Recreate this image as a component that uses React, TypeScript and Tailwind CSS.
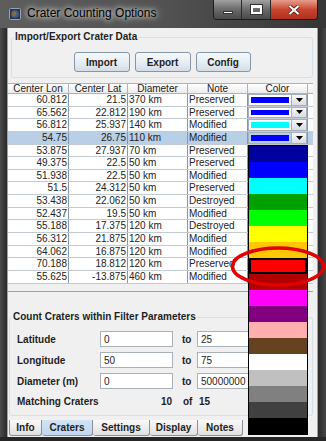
type Row = [string, string, string, string, string];

const rows: Row[] = [
  ["60.812", "21.5", "370 km", "Preserved", "bg-[#0000ff]"],
  ["65.562", "22.812", "190 km", "Preserved", "bg-[#0000ff]"],
  ["56.812", "25.937", "140 km", "Modified", "bg-[#00ffff]"],
  ["54.75", "26.75", "110 km", "Modified", "bg-[#0000ff]"],
  ["53.875", "27.937", "70 km", "Preserved", "bg-[#0000ff]"],
  ["49.375", "22.5", "50 km", "Preserved", "bg-[#0000ff]"],
  ["51.938", "22.5", "50 km", "Modified", "bg-[#0000ff]"],
  ["51.5", "24.312", "50 km", "Preserved", "bg-[#0000ff]"],
  ["53.438", "22.062", "50 km", "Destroyed", "bg-[#0000ff]"],
  ["52.437", "19.5", "50 km", "Modified", "bg-[#0000ff]"],
  ["55.188", "17.375", "120 km", "Destroyed", "bg-[#0000ff]"],
  ["56.312", "21.875", "120 km", "Modified", "bg-[#0000ff]"],
  ["64.062", "16.875", "120 km", "Modified", "bg-[#0000ff]"],
  ["70.188", "18.812", "120 km", "Preserved", "bg-[#ff0000]"],
  ["55.625", "-13.875", "460 km", "Modified", "bg-[#0000ff]"],
];

const swatches = [
  "bg-[#00009c]",
  "bg-[#0000ff]",
  "bg-[#00ffff]",
  "bg-[#00a000]",
  "bg-[#00ff00]",
  "bg-[#ffff00]",
  "bg-[#ffc800]",
  "bg-[#ff0000]",
  "bg-[#b00000]",
  "bg-[#ff00ff]",
  "bg-[#800080]",
  "bg-[#ffafaf]",
  "bg-[#654321]",
  "bg-[#ffffff]",
  "bg-[#c0c0c0]",
  "bg-[#808080]",
  "bg-[#404040]",
  "bg-[#000000]",
];

function TitleBar() {
  return (
    <div className="flex h-[28px] items-start bg-gradient-to-r from-[#5d5d5d] via-[#525252] to-[#353535]">
      <svg className="ml-[9px] mt-[8px]" width="12" height="12" viewBox="0 0 12 12">
        <rect x="0.5" y="0.5" width="11" height="11" rx="1" fill="#27344a" stroke="#9aa3ad" />
        <circle cx="6" cy="6" r="4" fill="#3a5a8a" />
        <path d="M3 5c1-2 3-2 4-1s1 3-1 4-3 0-3-3z" fill="#8a6a3a" />
      </svg>
      <span className="ml-[6px] mt-[6px] text-[12px] leading-[15px] text-black [text-shadow:0_0_5px_rgba(255,255,255,0.95),0_0_9px_rgba(255,255,255,0.8)]">
        Crater Counting Options
      </span>
      <div className="ml-auto mr-[8px] flex h-[20px] overflow-hidden rounded-b-[4px] border border-t-0 border-[#1c1c1c]">
        <div className="flex w-[28px] items-end justify-center bg-gradient-to-b from-[#a2a2a2] via-[#6a6a6a] to-[#4a4a4a] pb-[5px] border-r border-[#2a2a2a]">
          <div className="h-[3px] w-[10px] bg-white border border-[#333]" />
        </div>
        <div className="flex w-[29px] items-center justify-center bg-gradient-to-b from-[#a2a2a2] via-[#6a6a6a] to-[#4a4a4a] border-r border-[#2a2a2a]">
          <div className="h-[9px] w-[11px] border-2 border-t-[3px] border-white outline outline-1 outline-[#333]" />
        </div>
        <div className="flex w-[46px] items-center justify-center bg-gradient-to-b from-[#e49c8c] via-[#c9452f] to-[#b0301c]">
          <svg width="12" height="10" viewBox="0 0 12 10">
            <path d="M1.5 1l9 8M10.5 1l-9 8" stroke="#3a0a04" strokeWidth="3.4" />
            <path d="M1.5 1l9 8M10.5 1l-9 8" stroke="#fff" strokeWidth="2.2" />
          </svg>
        </div>
      </div>
    </div>
  );
}

function Button({ label, width }: { label: string; width: string }) {
  return (
    <div
      className={`${width} flex h-[20px] items-center justify-center rounded-[3px] border border-[#8596a6] bg-gradient-to-b from-[#f7f9fb] via-[#e8eef4] to-[#d3dde7] text-[10px] font-bold text-[#1e1e1e]`}
    >
      {label}
    </div>
  );
}

function Combo({ swatch, selected }: { swatch: string; selected?: boolean }) {
  return (
    <div className="flex h-full w-full">
      <div className={`flex-1 border border-[#a4b0bc] p-[2px] ${selected ? "bg-[#b8cfe5]" : "bg-white"}`}>
        <div className={`h-full w-full ${swatch}`} />
      </div>
      <div className="flex w-[15px] items-center justify-center border border-l-0 border-[#a4b0bc] bg-gradient-to-b from-[#f8f8f8] to-[#d9dde2]">
        <svg width="7" height="4" viewBox="0 0 7 4">
          <path d="M0 0h7L3.5 4z" fill="#000" />
        </svg>
      </div>
    </div>
  );
}

function CraterTable() {
  return (
    <div className="mt-[5px] h-[209px] w-[305px] border-b border-[#a0a0a0] bg-[#f0f0f0] text-[10px] text-[#222]">
      <div className="flex h-[11px] border-y border-[#a9b4bf] bg-gradient-to-b from-white to-[#ececec] leading-[9px]">
        <div className="w-[61px] border-r border-[#a9b4bf] text-center">Center Lon</div>
        <div className="w-[59px] border-r border-[#a9b4bf] text-center">Center Lat</div>
        <div className="w-[60px] border-r border-[#a9b4bf] text-center">Diameter</div>
        <div className="w-[60px] border-r border-[#a9b4bf] text-center">Note</div>
        <div className="w-[60px] border-r border-[#a9b4bf] text-center">Color</div>
      </div>
      {rows.map((r, i) => {
        const sel = i === 3;
        return (
          <div
            key={i}
            className={`flex h-[12.65px] border-b border-[#c4cad1] leading-[11px] ${sel ? "bg-[#b8cfe5]" : "bg-white"}`}
          >
            <div className="w-[61px] border-r border-[#8797a9] pr-[1px] text-right">{r[0]}</div>
            <div className="w-[59px] border-r border-[#8797a9] pr-[1px] text-right">{r[1]}</div>
            <div className="w-[60px] border-r border-[#8797a9] pl-[1px]">{r[2]}</div>
            <div className="w-[60px] border-r border-[#8797a9] pl-[1px]">{r[3]}</div>
            <div className="w-[60px] border-r border-[#8797a9]">
              <Combo swatch={r[4]} selected={sel} />
            </div>
          </div>
        );
      })}
    </div>
  );
}

function FilterRow({ label, from, to }: { label: string; from: string; to: string }) {
  return (
    <div className="flex h-[16px] items-center text-[10px]">
      <div className="w-[83px] font-bold">{label}</div>
      <div className="flex h-full w-[73px] items-center border border-[#a9b0b8] bg-white pl-[3px]">{from}</div>
      <div className="w-[24px] pl-[9px] font-bold">to</div>
      <div className="flex h-full w-[100px] items-center border border-[#a9b0b8] bg-white pl-[3px]">{to}</div>
    </div>
  );
}

function Tabs() {
  const tabs = [
    { label: "Info", w: "w-[33px]" },
    { label: "Craters", w: "w-[51px]" },
    { label: "Settings", w: "w-[57px]" },
    { label: "Display", w: "w-[48px]" },
    { label: "Notes", w: "w-[45px]" },
  ];
  return (
    <div className="ml-[1px] mt-[4px] flex h-[16px] text-[10px] font-bold text-[#1e1e1e]">
      {tabs.map((t, i) => (
        <div
          key={t.label}
          className={`${t.w} flex items-center justify-center rounded-b-[3px] border border-t-0 border-[#8b9099] ${i > 0 ? "border-l-0" : ""} ${
            i === 1 ? "bg-gradient-to-b from-[#d2e3f4] to-[#c1d7ee]" : "bg-gradient-to-b from-[#f9f9f9] to-[#e1e1e1]"
          }`}
        >
          {t.label}
        </div>
      ))}
    </div>
  );
}

export default function App() {
  return (
    <div className="relative flex h-[441px] w-[326px] flex-col overflow-hidden bg-[#2c2c2c] font-['Liberation_Sans',Arial,sans-serif] text-[#1e1e1e]">
      <TitleBar />
      <div className="flex h-[409px]">
        <div className="w-[8px] border-r border-[#97a2ad] bg-gradient-to-r from-[#4c4c4c] to-[#2a2a2a]" />
        <div className="flex w-[309px] flex-col bg-[#f0f0f0]">
          <fieldset className="ml-[3px] mr-[4px] mt-[3px] h-[47px] rounded-[3px] border border-[#d5dfe5]">
            <legend className="ml-[2px] px-[1px] text-[10px] font-bold leading-[12px]">Import/Export Crater Data</legend>
            <div className="mt-[9px] flex justify-center gap-[5px]">
              <Button label="Import" width="w-[56px]" />
              <Button label="Export" width="w-[56px]" />
              <Button label="Config" width="w-[55px]" />
            </div>
          </fieldset>
          <CraterTable />
          <fieldset className="ml-[1px] mr-[4px] mt-[19px] h-[105px] rounded-[3px] border border-[#d5dfe5]">
            <legend className="ml-[2px] px-[1px] text-[10px] font-bold leading-[12px]">
              Count Craters within Filter Parameters
            </legend>
            <div className="mt-[8px] flex flex-col gap-[5px] pl-[7px]">
              <FilterRow label="Latitude" from="0" to="25" />
              <FilterRow label="Longitude" from="50" to="75" />
              <FilterRow label="Diameter (m)" from="0" to="50000000" />
              <div className="mt-[1px] flex h-[12px] items-center text-[10px] font-bold">
                <div className="w-[83px]">Matching Craters</div>
                <div className="w-[73px] pr-[1px] text-right">10</div>
                <div className="w-[24px] pl-[10px]">of</div>
                <div className="pl-[2px]">15</div>
              </div>
            </div>
          </fieldset>
          <Tabs />
        </div>
        <div className="w-[9px] border-l border-[#97a2ad] bg-gradient-to-r from-[#2a2a2a] to-[#464646]" />
      </div>
      <div className="h-[4px] bg-[#262626]" />

      <div className="absolute left-[248px] top-[145px] flex w-[60px] flex-col border border-black">
        {swatches.map((s, i) => (
          <div key={i} className={`h-[16px] ${s} ${i === 7 ? "border-2 border-black" : ""}`} />
        ))}
      </div>

      <svg className="absolute left-[230px] top-[246px]" width="96" height="42" viewBox="0 0 96 42">
        <ellipse cx="48" cy="20.5" rx="45.5" ry="18.5" fill="none" stroke="#e20000" strokeWidth="3.5" />
      </svg>
    </div>
  );
}
